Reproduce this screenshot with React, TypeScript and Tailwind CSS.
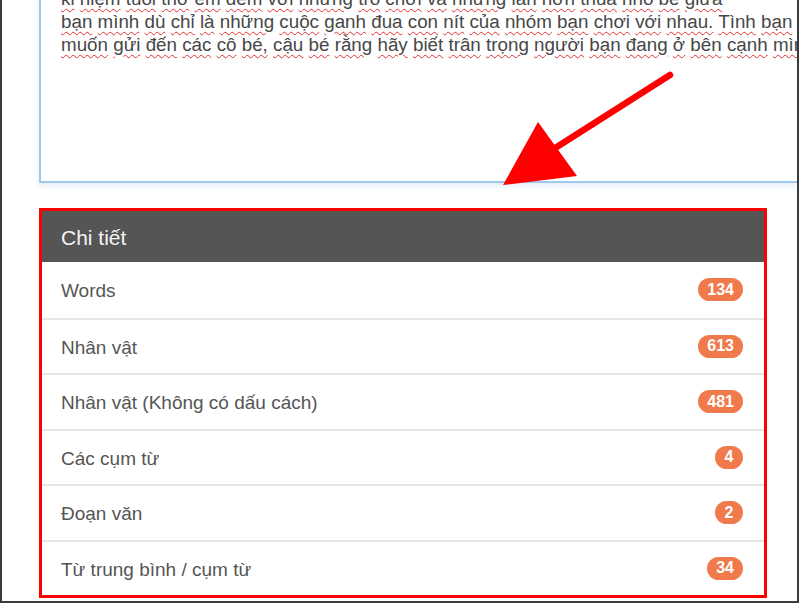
import React from "react";

const LINES = [
  "kỉ niệm tuổi thơ êm đềm với những trò chơi và những lần hơn thua nhỏ bé giữa",
  "bạn mình dù chỉ là những cuộc ganh đua con nít của nhóm bạn chơi với nhau. Tình bạn",
  "muốn gửi đến các cô bé, cậu bé rằng hãy biết trân trọng người bạn đang ở bên cạnh mình",
];

const STATS = [
  { label: "Words", value: 134 },
  { label: "Nhân vật", value: 613 },
  { label: "Nhân vật (Không có dấu cách)", value: 481 },
  { label: "Các cụm từ", value: 4 },
  { label: "Đoạn văn", value: 2 },
  { label: "Từ trung bình / cụm từ", value: 34 },
];

function SpellLine({ text }: { text: string }) {
  const words = text.split(" ");
  return (
    <div className="whitespace-nowrap h-[23px] leading-[23px]">
      {words.map((w, i) => (
        <React.Fragment key={i}>
          <span className="underline decoration-wavy decoration-[#e23030] decoration-1 underline-offset-[3px]">
            {w}
          </span>
          {i < words.length - 1 ? " " : ""}
        </React.Fragment>
      ))}
    </div>
  );
}

export default function App() {
  return (
    <div
      className="relative w-[800px] h-[607px] bg-white overflow-hidden"
      style={{ fontFamily: '"Liberation Sans", Arial, sans-serif' }}
    >
      <div className="w-[799px] h-[603px] border-l-2 border-r-2 border-b-2 border-[#3a3a3a] overflow-hidden">
        {/* text box */}
        <div className="ml-[37px] mt-[-24px] h-[207px] border-l-2 border-b-2 border-[#9ec9ee] bg-white pl-[20px] pt-[11px] text-[18.8px] text-[#474747] shadow-[0_3px_6px_rgba(120,160,200,0.2)] overflow-hidden">
          {LINES.map((l, i) => (
            <SpellLine key={i} text={l} />
          ))}
        </div>

        {/* details panel */}
        <div className="ml-[37px] mt-[25px] w-[728px] border-[3px] border-[#ff0000]">
          <div className="h-[51px] bg-[#555555] flex items-center pl-[19px] pt-[2px] text-[21px] text-[#f4f4f4]">
            Chi tiết
          </div>
          {STATS.map((s, i) => (
            <div
              key={s.label}
              className={`h-[55.5px] flex items-center justify-between pl-[19px] pr-[21px] text-[19px] text-[#555555] ${
                i > 0 ? "border-t-2 border-[#e6e6e6]" : ""
              }`}
            >
              <span className="pt-[3px]">{s.label}</span>
              <span className="h-[23px] min-w-[28px] px-[9px] rounded-full bg-[#f07a4c] text-white text-[16px] font-bold flex items-center justify-center">
                {s.value}
              </span>
            </div>
          ))}
        </div>
      </div>

      {/* annotation arrow */}
      <svg className="absolute left-0 top-0 pointer-events-none" width="800" height="607" viewBox="0 0 800 607">
        <line x1="670" y1="75" x2="552" y2="150" stroke="#ff0000" strokeWidth="6.5" strokeLinecap="round" />
        <polygon points="538,122 577,176 503,185" fill="#ff0000" />
      </svg>
    </div>
  );
}
